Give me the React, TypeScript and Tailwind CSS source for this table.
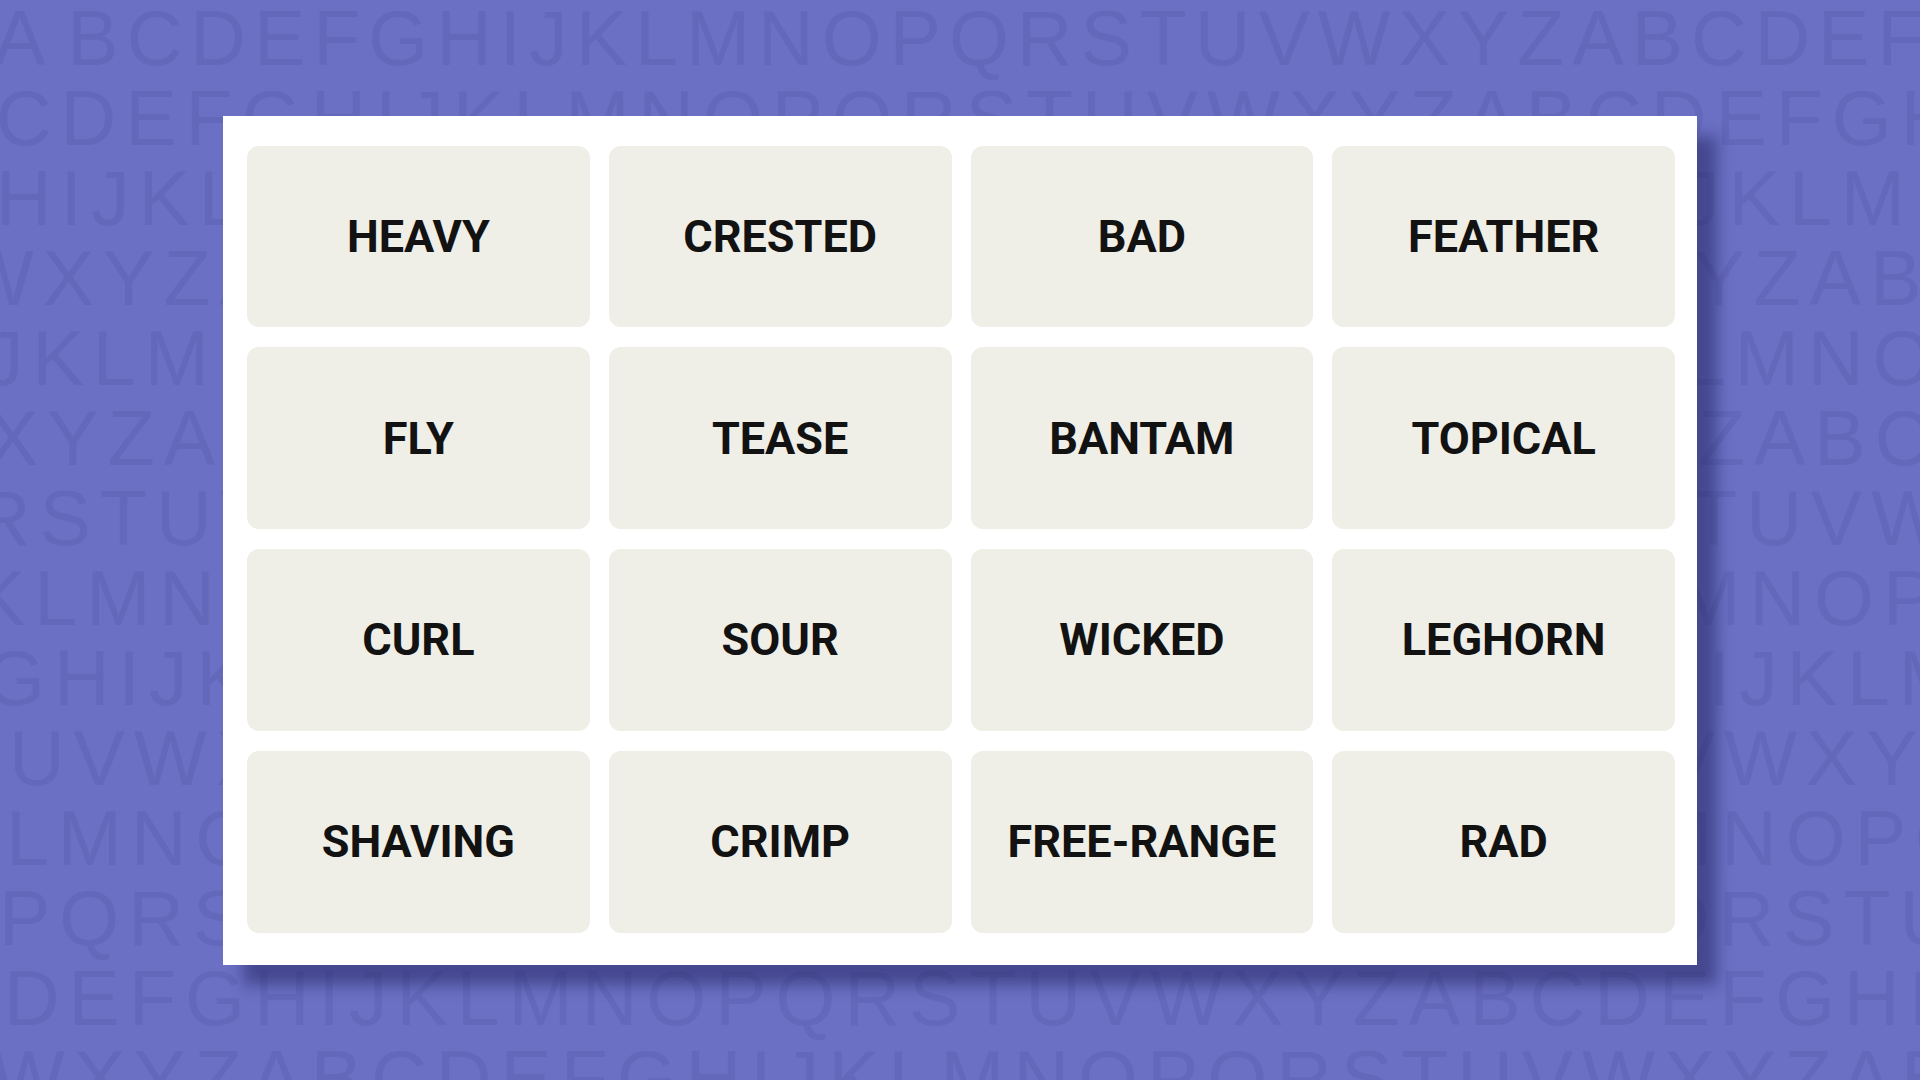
import React from "react";

const ALPHA = "ABCDEFGHIJKLMNOPQRSTUVWXYZ";

function seq(start: string, n: number): string {
  const i0 = ALPHA.indexOf(start);
  let s = "";
  for (let i = 0; i < n; i++) s += ALPHA[(i0 + i) % 26];
  return s;
}

const ROWS: { start: string; cls: string; lead?: boolean }[] = [
  { start: "A", cls: "ml-[-6px] tracking-[8px]", lead: true },
  { start: "C", cls: "ml-[-4px] tracking-[9px]" },
  { start: "H", cls: "ml-[-4px] tracking-[9px]" },
  { start: "W", cls: "ml-[-39px] tracking-[9px]" },
  { start: "J", cls: "ml-[-15px] tracking-[9px]" },
  { start: "X", cls: "ml-[-13px] tracking-[9px]" },
  { start: "R", cls: "ml-[-25px] tracking-[9px]" },
  { start: "K", cls: "ml-[-26px] tracking-[9px]" },
  { start: "G", cls: "ml-[-15px] tracking-[9px]" },
  { start: "U", cls: "ml-[9px] tracking-[9px]" },
  { start: "L", cls: "ml-[6px] tracking-[9px]" },
  { start: "P", cls: "ml-[-1px] tracking-[9px]" },
  { start: "D", cls: "ml-[4px] tracking-[9px]" },
  { start: "W", cls: "ml-[-8px] tracking-[9px]" },
];

const WORDS = [
  "HEAVY", "CRESTED", "BAD", "FEATHER",
  "FLY", "TEASE", "BANTAM", "TOPICAL",
  "CURL", "SOUR", "WICKED", "LEGHORN",
  "SHAVING", "CRIMP", "FREE-RANGE", "RAD",
];

export default function App() {
  return (
    <div className="relative w-full h-[1080px] overflow-hidden bg-[#6b70c4]">
      <div
        className="absolute left-0 top-[-2px] w-full flex flex-col text-[#6468bb] text-[77px] leading-[80px] whitespace-nowrap select-none"
        style={{ fontFamily: '"Liberation Sans", Arial, sans-serif' }}
      >
        {ROWS.map((r, i) => (
          <div key={i} className={`h-[80px] ${r.cls}`}>
            {r.lead ? (
              <>
                <span className="mr-[14px]">A</span>
                {seq("B", 36)}
              </>
            ) : (
              seq(r.start, 36)
            )}
          </div>
        ))}
      </div>

      <div className="relative flex h-full w-full items-center justify-center">
        <div className="w-[1474px] h-[849px] bg-white pl-[24px] pr-[22px] pt-[30px] pb-[32px] shadow-[20px_20px_14px_rgba(25,25,80,0.45)]">
          <div className="grid h-full grid-cols-4 grid-rows-4 gap-x-[19px] gap-y-[20px]">
            {WORDS.map((w) => (
              <div
                key={w}
                className="flex items-center justify-center rounded-[12px] bg-[#efeee7] text-[#121212] text-[45px] font-bold leading-none"
                style={{ fontFamily: 'Roboto, "Liberation Sans", sans-serif' }}
              >
                {w}
              </div>
            ))}
          </div>
        </div>
      </div>
    </div>
  );
}
